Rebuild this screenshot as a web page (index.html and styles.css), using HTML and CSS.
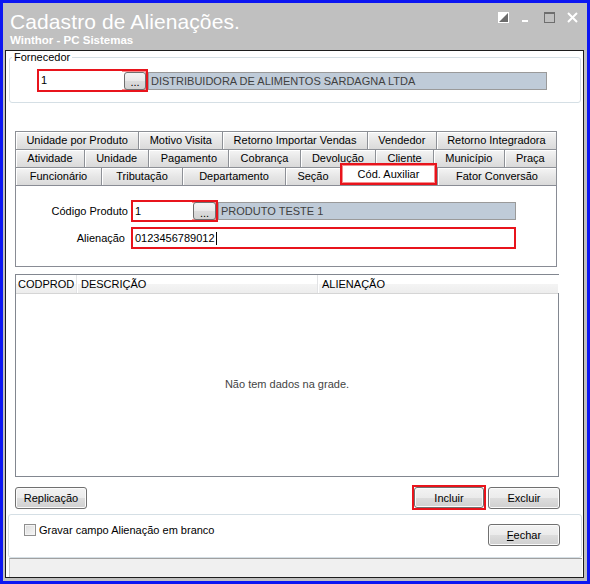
FILE: index.html
```html
<!DOCTYPE html>
<html lang="pt-BR">

<head>
  <meta charset="UTF-8" />
  <meta name="viewport" content="width=device-width, initial-scale=1.0" />
  <title>Cadastro de Alienações | Winthor</title>
  <link rel="stylesheet" href="styles.css">
</head>

<body>
  <div class="window">
    <div class="title-bar">
      <div class="title-text">
        <h1>Cadastro de Alienações.</h1>
        <div class="subtitle">Winthor - PC Sistemas</div>
      </div>
      <div class="title-icons">
        <svg width="11" height="11" viewBox="0 0 11 11">
          <rect x="0.5" y="0.5" width="10" height="10" fill="#6b6b6b" stroke="#fff" />
          <polygon points="0,0 11,0 0,11" fill="#fff" />
        </svg>
        <svg width="11" height="11" viewBox="0 0 11 11">
          <rect x="1" y="8" width="6" height="2" fill="#fff" />
        </svg>
        <svg width="11" height="11" viewBox="0 0 11 11">
          <rect x="0.5" y="0.5" width="10" height="10" fill="none" stroke="#6e6e6e" />
          <rect x="0" y="0" width="11" height="2" fill="#6e6e6e" />
        </svg>
        <svg width="11" height="11" viewBox="0 0 11 11">
          <path d="M1 1 L10 10 M10 1 L1 10" stroke="#fff" stroke-width="2" />
        </svg>
      </div>
    </div>

    <div class="client">
      <fieldset class="group">
        <legend>Fornecedor</legend>
        <div class="lookup-row">
          <div class="mark mark-forn">
            <div class="edit edit-forn">1</div>
            <button class="dots">...</button>
          </div>
          <div class="desc desc-forn">DISTRIBUIDORA DE ALIMENTOS SARDAGNA LTDA</div>
        </div>
      </fieldset>

      <div class="tabs">
        <div class="tab-row">
          <div class="tab">Unidade por Produto</div>
          <div class="tab">Motivo Visita</div>
          <div class="tab">Retorno Importar Vendas</div>
          <div class="tab">Vendedor</div>
          <div class="tab">Retorno Integradora</div>
        </div>
        <div class="tab-row">
          <div class="tab">Atividade</div>
          <div class="tab">Unidade</div>
          <div class="tab">Pagamento</div>
          <div class="tab">Cobrança</div>
          <div class="tab">Devolução</div>
          <div class="tab">Cliente</div>
          <div class="tab">Município</div>
          <div class="tab">Praça</div>
        </div>
        <div class="tab-row front">
          <div class="tab tab-func">Funcionário</div>
          <div class="tab tab-trib">Tributação</div>
          <div class="tab tab-dept">Departamento</div>
          <div class="tab tab-secao">Seção</div>
          <div class="tab tab-aux active">Cód. Auxiliar</div>
          <div class="tab">Fator Conversão</div>
        </div>
      </div>

      <div class="tab-panel">
        <div class="field-row">
          <label class="field-label">Código Produto</label>
          <div class="mark mark-prod">
            <div class="edit edit-prod">1</div>
            <button class="dots">...</button>
          </div>
          <div class="desc desc-prod">PRODUTO TESTE 1</div>
        </div>
        <div class="field-row second">
          <label class="field-label label-alien">Alienação</label>
          <div class="mark mark-alien">
            <div class="edit edit-alien">0123456789012<span class="caret"></span></div>
          </div>
        </div>
      </div>

      <div class="grid">
        <div class="grid-head">
          <div class="col col-cod">CODPROD</div>
          <div class="col col-desc">DESCRIÇÃO</div>
          <div class="col col-alien">ALIENAÇÃO</div>
        </div>
        <div class="grid-empty">Não tem dados na grade.</div>
      </div>

      <div class="actions">
        <button class="btn">Replicação</button>
        <div class="spacer"></div>
        <div class="mark mark-btn">
          <button class="btn btn-incluir">Incluir</button>
        </div>
        <button class="btn btn-excluir">Excluir</button>
      </div>

      <div class="footer">
        <label class="check">
          <span class="check-box"></span>
          Gravar campo Alienação em branco
        </label>
        <button class="btn"><u>F</u>echar</button>
      </div>

      <div class="status"></div>
    </div>
  </div>
</body>

</html>
```

FILE: styles.css
```css
* {
  box-sizing: border-box;
  margin: 0;
  padding: 0;
}

body {
  font-family: 'Liberation Sans', Arial, sans-serif;
  font-size: 11px;
  color: #000;
  background: #fff;
}

.window {
  width: 590px;
  height: 584px;
  border: 3px solid #0c16f2;
  background: #c0c0c0;
  padding: 0 3px 3px 2px;
  display: flex;
  flex-direction: column;
}

/* title bar */
.title-bar {
  height: 47px;
  flex: none;
  display: flex;
  justify-content: space-between;
  padding: 0 6px 0 5px;
  color: #fff;
}

.title-bar h1 {
  font-size: 21px;
  font-weight: normal;
  line-height: 21px;
  margin-top: 8px;
  letter-spacing: 0.1px;
}

.subtitle {
  font-size: 11.5px;
  font-weight: bold;
  line-height: 13px;
  margin-top: 2px;
}

.title-icons {
  display: flex;
  gap: 12px;
  padding-top: 9px;
}

.title-icons svg {
  display: block;
}

/* client area */
.client {
  flex: 1;
  border: 1px solid #1c1c1c;
  background: #fff;
  display: flex;
  flex-direction: column;
  min-height: 0;
}

.group {
  margin: 0 2px 0 3px;
  border: 1px solid #d5dfe5;
  border-radius: 3px;
  padding: 5px 0 10px 2px;
}

.group legend {
  padding: 0 2px;
  line-height: 13px;
}

.lookup-row {
  display: flex;
  align-items: center;
  margin-left: 25px;
}

/* red highlight around fields */
.mark {
  display: flex;
  align-items: center;
  border: 2px solid #e8141c;
  box-shadow: inset 0 0 0 1px #f58c8c;
  background: #fff;
}

.mark-forn {
  width: 111px;
  height: 23px;
}

.edit {
  background: #fff;
  padding-left: 2px;
  color: #000;
  white-space: nowrap;
}

.edit-forn {
  width: 83px;
  height: 19px;
  line-height: 19px;
}

.dots {
  width: 22px;
  height: 18px;
  margin-left: 2px;
  border: 1px solid #707070;
  border-radius: 3px;
  background: linear-gradient(#f4f4f4, #e9e9e9 50%, #dcdcdc 51%, #d2d2d2);
  font-family: inherit;
  font-size: 11px;
  line-height: 12px;
  padding-top: 3px;
  color: #000;
}

.desc {
  height: 18px;
  background: #bfcbd8;
  border: 1px solid #9a9a9a;
  padding-left: 2px;
  line-height: 16px;
  color: #404040;
  white-space: nowrap;
}

.desc-forn {
  width: 399px;
}

/* tabs */
.tabs {
  margin: 28px 0 0 9px;
  width: 542px;
}

.tab-row {
  display: flex;
  height: 18px;
}

.tab {
  flex: 1 1 auto;
  text-align: center;
  line-height: 17px;
  white-space: nowrap;
  border-top: 1px solid #8d9096;
  border-left: 1px solid #8d9096;
  box-shadow: inset 1px 1px 0 #fff;
  background: linear-gradient(#f5f5f5, #e6e6e6 50%, #dadada);
}

.tab:last-child {
  border-right: 1px solid #8d9096;
}

/* front row keeps fixed tab widths so the selected tab lines up */
.tab-func {
  flex: 0 0 86px;
}

.tab-trib {
  flex: 0 0 81px;
}

.tab-dept {
  flex: 0 0 103px;
}

.tab-secao {
  flex: 0 0 55px;
}

.tab-aux {
  flex: 0 0 97px;
}

.tab.active {
  position: relative;
  z-index: 1;
  margin-top: -4px;
  height: 22px;
  line-height: 18px;
  background: #fff;
  border: 2px solid #e8141c;
  box-shadow: inset 0 0 0 1px #f58c8c;
}

.tab-panel {
  margin-left: 9px;
  width: 542px;
  height: 82px;
  flex: none;
  border: 1px solid #898c95;
  padding-top: 14px;
}

.field-row {
  display: flex;
  align-items: center;
  height: 22px;
}

.field-row.second {
  margin-top: 5px;
}

.field-label {
  width: 112px;
  margin-right: 3px;
  text-align: right;
}

.label-alien {
  padding-right: 3px;
}

.mark-prod {
  width: 87px;
  height: 22px;
}

.edit-prod {
  width: 59px;
  height: 18px;
  line-height: 18px;
}

.mark-prod .dots {
  width: 23px;
  margin-left: 1px;
}

.desc-prod {
  width: 298px;
}

.mark-alien {
  width: 385px;
  height: 22px;
}

.edit-alien {
  flex: 1;
  height: 18px;
  line-height: 18px;
  padding-left: 2px;
  display: flex;
  align-items: center;
}

.caret {
  display: inline-block;
  width: 1px;
  height: 13px;
  background: #000;
  margin-left: 1px;
}

/* data grid */
.grid {
  margin: 7px 0 0 9px;
  width: 544px;
  height: 203px;
  flex: none;
  border: 1px solid #828790;
  display: flex;
  flex-direction: column;
}

.grid-head {
  display: flex;
  height: 19px;
  border-bottom: 1px solid #d5d5d5;
  background: linear-gradient(#fff 50%, #f4f4f4 50%, #ededed);
}

.col {
  line-height: 18px;
  padding-left: 2px;
  border-right: 1px solid #e2e3e5;
  box-shadow: 1px 0 0 #fff;
}

.col-cod {
  width: 61px;
}

.col-desc {
  width: 241px;
  padding-left: 4px;
}

.col-alien {
  flex: 1;
  padding-left: 4px;
  border-right: none;
}

.grid-empty {
  flex: 1;
  display: flex;
  align-items: center;
  justify-content: center;
  color: #444;
  padding-bottom: 2px;
}

/* buttons */
.btn {
  width: 72px;
  height: 22px;
  border: 1px solid #707070;
  border-radius: 3px;
  background: linear-gradient(#f3f3f3, #ebebeb 50%, #dddddd 51%, #d0d0d0);
  box-shadow: inset 0 0 0 1px #fbfbfb;
  font-family: inherit;
  font-size: 11px;
  color: #000;
}

.actions {
  display: flex;
  align-items: center;
  height: 25px;
  margin-top: 8px;
  padding: 0 23px 0 9px;
  flex: none;
}

.spacer {
  flex: 1;
}

.mark-btn {
  width: 74px;
  height: 25px;
  background: transparent;
  box-shadow: none;
}

.btn-incluir {
  width: 70px;
  height: 21px;
}

.btn-excluir {
  margin-left: 2px;
}

.footer {
  display: flex;
  justify-content: space-between;
  align-items: flex-start;
  height: 44px;
  margin: 4px 1px 0 2px;
  padding: 9px 21px 0 15px;
  border: 1px solid #d5dfe5;
  border-radius: 3px;
  flex: none;
}

.check {
  display: flex;
  align-items: center;
  gap: 3px;
  height: 12px;
}

.check-box {
  width: 12px;
  height: 12px;
  border: 1px solid #8f8f8f;
  background: linear-gradient(135deg, #dcdcdc, #f6f6f6);
  box-shadow: inset 0 0 0 1px #f4f4f4;
}

.status {
  flex: 1;
  margin: 0 1px 0 3px;
  background: #f0f0f0;
  border-top: 1px solid #a0a0a0;
  border-left: 1px solid #c8c8c8;
}
```
